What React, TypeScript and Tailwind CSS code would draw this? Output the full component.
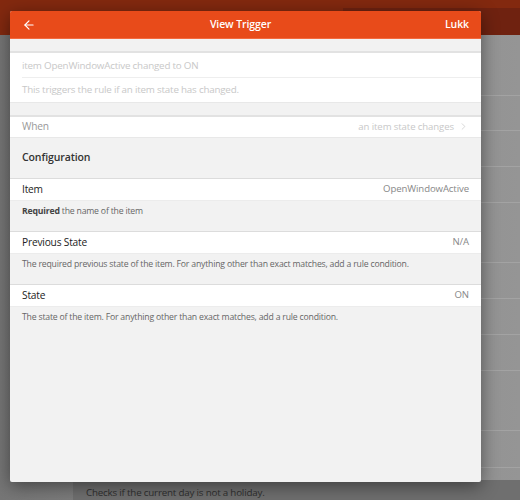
import { ArrowLeft, ChevronRight } from 'lucide-react';

const font = { fontFamily: '"Open Sans", "Noto Sans", sans-serif' };

function Row({ label, value }: { label: string; value: string }) {
  return (
    <div className="flex items-center justify-between h-[23px] px-3 bg-white border-t border-[#dcdcdc] border-b border-b-[#ececec]">
      <span className="text-[10.2px] tracking-[-0.2px] text-[#222]">{label}</span>
      <span className="text-[9.6px] tracking-[-0.1px] text-[#888]">{value}</span>
    </div>
  );
}

function Hint({ children }: { children: React.ReactNode }) {
  return <div className="h-[30px] px-3 pt-[4px] text-[8.7px] tracking-[-0.2px] text-[#666]">{children}</div>;
}

export default function App() {
  // background rows showing through the overlay on the right
  const lines = [95, 130, 166, 202, 262, 298, 334, 370, 430, 467];

  return (
    <div className="relative w-[520px] h-[500px] overflow-hidden bg-[#858585]" style={font}>
      <div className="h-[35px] bg-[#83290f] relative">
        <div className="absolute left-[343px] top-[8px] right-0 bottom-0 bg-[#6f2210]" />
      </div>
      <div className="absolute inset-x-0 top-[35px] bottom-0 bg-gradient-to-r from-[#767676] via-[#8a8a8a] to-[#959595]" />
      {lines.map((y) => (
        <div key={y} className="absolute left-[73px] right-0 h-px bg-[#a3a3a3]" style={{ top: y }} />
      ))}
      <div className="absolute left-[73px] right-0 top-[480px] bottom-0 bg-[#6f6f6f]">
        <div className="pl-[13px] pt-[6px] text-[9.8px] tracking-[-0.2px] text-[#2e2e2e]">Checks if the current day is not a holiday.</div>
      </div>

      {/* trigger dialog */}
      <div className="absolute left-[10px] top-[11px] w-[471px] h-[471px] rounded-[2px] overflow-hidden bg-[#f2f2f2] shadow-[0_4px_18px_rgba(0,0,0,0.45)] flex flex-col">
        <div className="h-[28px] shrink-0 bg-[#e84b1a] border-b border-[#f26a3e] flex items-center justify-between px-[12px] text-white">
          <ArrowLeft size={14} strokeWidth={2} />
          <span className="text-[10.5px] tracking-[-0.1px] font-semibold">View Trigger</span>
          <span className="text-[10.5px] tracking-[-0.1px] font-semibold">Lukk</span>
        </div>
        <div className="h-[12px] shrink-0" />
        <div className="bg-white border-t-2 border-[#e2e2e2] border-b border-b-[#e8e8e8]">
          <div className="ml-3 pr-3 h-[25px] pt-[2px] flex items-center border-b border-[#eeeeee] text-[9.8px] tracking-[-0.2px] text-[#c8c8c8]">
            item OpenWindowActive changed to ON
          </div>
          <div className="px-3 h-[24px] flex items-center text-[9.8px] tracking-[-0.2px] text-[#c8c8c8]">
            This triggers the rule if an item state has changed.
          </div>
        </div>
        <div className="h-[12px] shrink-0" />
        <div className="flex items-center justify-between h-[23px] px-3 bg-white border-t-2 border-[#e2e2e2] border-b border-b-[#e8e8e8]">
          <span className="text-[10.2px] tracking-[-0.2px] text-[#999]">When</span>
          <span className="flex items-center gap-[4px] text-[9.6px] tracking-[-0.1px] text-[#c8c8c8]">
            an item state changes
            <ChevronRight size={11} strokeWidth={1.5} />
          </span>
        </div>
        <div className="h-[40px] flex items-center px-3 text-[10.5px] tracking-[-0.1px] font-semibold text-[#333]">Configuration</div>
        <Row label="Item" value="OpenWindowActive" />
        <Hint>
          <b className="font-bold text-[#444]">Required</b> the name of the item
        </Hint>
        <Row label="Previous State" value="N/A" />
        <Hint>The required previous state of the item. For anything other than exact matches, add a rule condition.</Hint>
        <Row label="State" value="ON" />
        <Hint>The state of the item. For anything other than exact matches, add a rule condition.</Hint>
      </div>
    </div>
  );
}
